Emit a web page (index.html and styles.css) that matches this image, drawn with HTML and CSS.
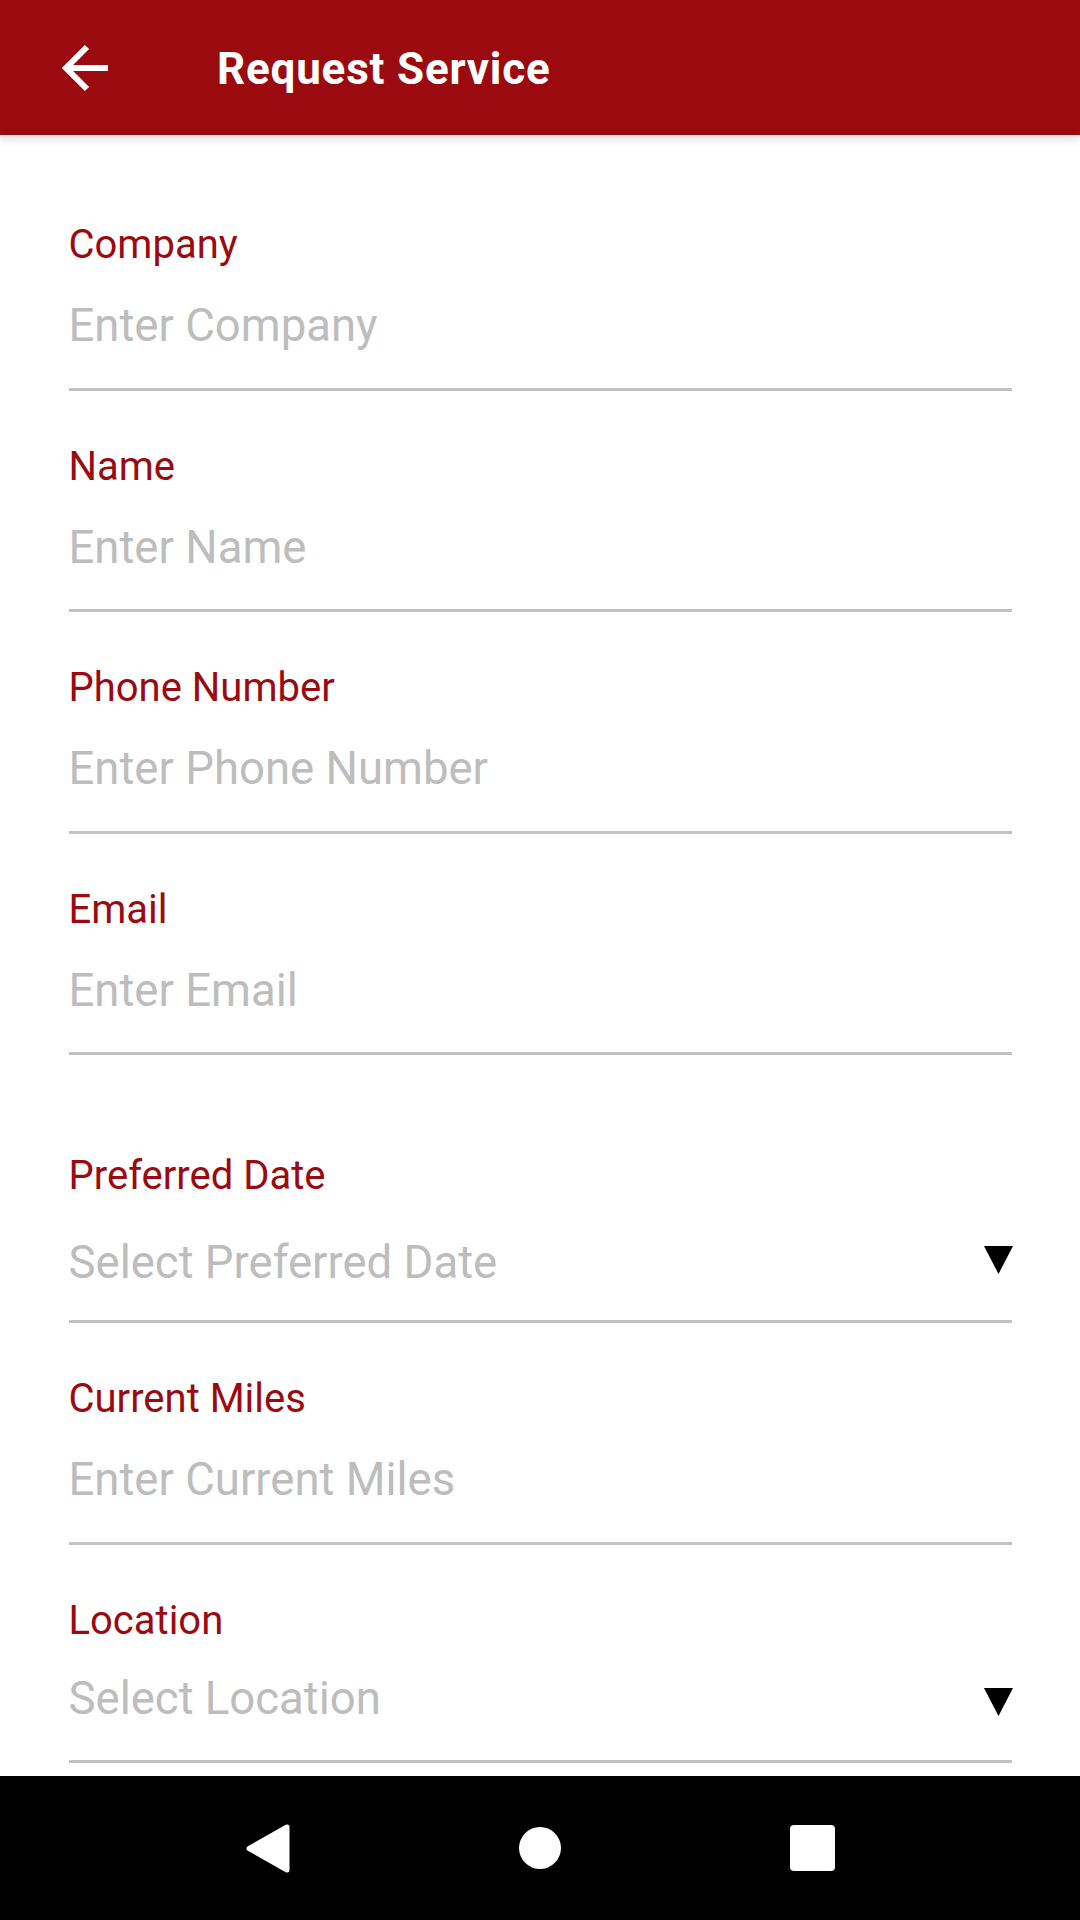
FILE: index.html
```html
<!DOCTYPE html>
<html lang="en">
<head>
<meta charset="utf-8">
<title>Request Service</title>
<link rel="stylesheet" href="styles.css">
</head>
<body>
<div class="screen">
  <header class="appbar">
    <svg class="back" width="48" height="48" viewBox="0 0 48 48" aria-hidden="true">
      <path d="M6 24H48M27 3L6 24L27 45" fill="none" stroke="#fff" stroke-width="6" stroke-linejoin="miter"/>
    </svg>
    <h1 class="title">Request Service</h1>
  </header>

  <main class="form">
    <div class="field field-first">
      <div class="label">Company</div>
      <div class="value">Enter Company</div>
    </div>
    <div class="field">
      <div class="label">Name</div>
      <div class="value">Enter Name</div>
    </div>
    <div class="field">
      <div class="label">Phone Number</div>
      <div class="value">Enter Phone Number</div>
    </div>
    <div class="field">
      <div class="label">Email</div>
      <div class="value">Enter Email</div>
    </div>
    <div class="field field-date">
      <div class="label">Preferred Date</div>
      <div class="value">
        <span>Select Preferred Date</span>
        <svg class="caret caret-up" width="29" height="28" viewBox="0 0 29 28" aria-hidden="true"><polygon points="0,0 29,0 14.5,28" fill="#000"/></svg>
      </div>
    </div>
    <div class="field">
      <div class="label">Current Miles</div>
      <div class="value">Enter Current Miles</div>
    </div>
    <div class="field field-location">
      <div class="label">Location</div>
      <div class="value">
        <span>Select Location</span>
        <svg class="caret caret-down" width="29" height="28" viewBox="0 0 29 28" aria-hidden="true"><polygon points="0,0 29,0 14.5,28" fill="#000"/></svg>
      </div>
    </div>
  </main>

  <nav class="navbar">
    <div class="navbtn">
      <svg width="44" height="49" viewBox="0 0 44 49" aria-hidden="true"><polygon points="41,3 41,46 3,24.5" fill="#fff" stroke="#fff" stroke-width="5" stroke-linejoin="round"/></svg>
    </div>
    <div class="navbtn">
      <div class="home"></div>
    </div>
    <div class="navbtn">
      <div class="recents"></div>
    </div>
  </nav>
</div>
</body>
</html>
```
FILE: styles.css
```css
* { box-sizing: border-box; }

html, body {
  margin: 0;
  padding: 0;
  background: #ffffff;
}

body {
  font-family: Roboto, "Liberation Sans", Arial, sans-serif;
}

.screen {
  width: 1080px;
  height: 1920px;
  display: flex;
  flex-direction: column;
  overflow: hidden;
}

.appbar {
  flex: 0 0 135px;
  height: 135px;
  background: #9b0a0f;
  display: flex;
  align-items: center;
  box-shadow: 0 3px 10px rgba(0, 0, 0, 0.16);
  position: relative;
  z-index: 1;
}

.back {
  margin-left: 60px;
  flex: 0 0 auto;
}

.title {
  margin: 2px 0 0 109px;
  color: #ffffff;
  font-family: Roboto, "Liberation Sans", Arial, sans-serif;
  font-weight: 700;
  font-size: 44px;
  letter-spacing: 0.8px;
  line-height: 56px;
}

.form {
  flex: 1 1 auto;
  padding: 34px 68px 0 68.5px;
  display: flex;
  flex-direction: column;
  overflow: hidden;
}

.field {
  display: flex;
  flex-direction: column;
  gap: 30px;
  padding-top: 52px;
  padding-bottom: 34.5px;
  border-bottom: 3px solid #c2c2c2;
}

.label {
  color: #9b0a0f;
  font-size: 40px;
  line-height: 48px;
  height: 48px;
}

.value {
  color: #bdbdbd;
  font-size: 45.5px;
  line-height: 54px;
  height: 54px;
  display: flex;
  align-items: center;
  justify-content: space-between;
}

.field-date {
  padding-top: 97px;
  gap: 36px;
  padding-bottom: 30px;
}

.field-location {
  gap: 27px;
  padding-bottom: 34px;
}

.caret {
  flex: 0 0 auto;
  margin-right: -0.5px;
}

.caret-up {
  margin-bottom: 7px;
}

.caret-down {
  margin-top: 6px;
}

.navbar {
  flex: 0 0 144px;
  height: 144px;
  background: #000000;
  display: flex;
  justify-content: center;
  align-items: center;
}

.navbtn {
  width: 272px;
  height: 144px;
  display: flex;
  align-items: center;
  justify-content: center;
}

.home {
  width: 42px;
  height: 42px;
  border-radius: 50%;
  background: #ffffff;
}

.recents {
  width: 45px;
  height: 46px;
  border-radius: 4px;
  background: #ffffff;
}
```
